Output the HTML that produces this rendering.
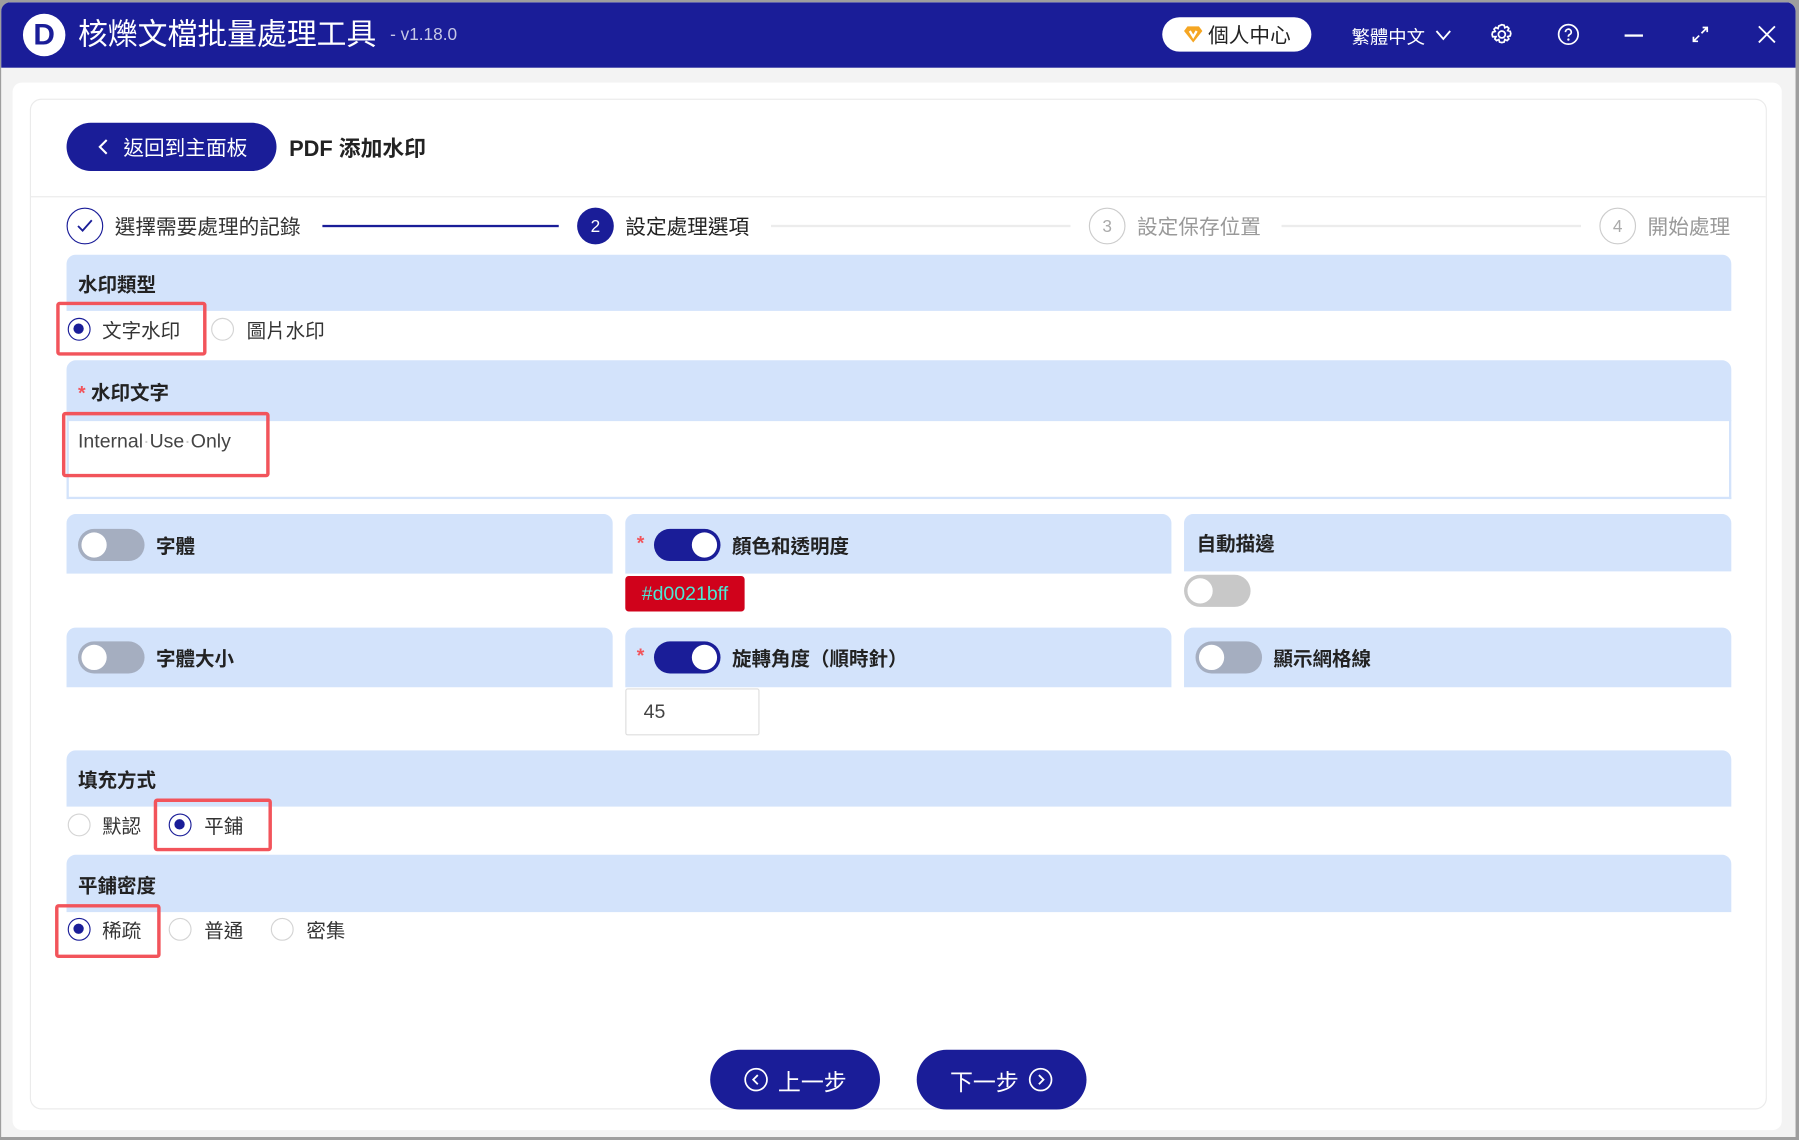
<!DOCTYPE html>
<html><head><meta charset="utf-8">
<style>
*{box-sizing:border-box;margin:0;padding:0}
html,body{width:1799px;height:1140px;overflow:hidden;background:#9e9e9e}
#w{position:absolute;left:0;top:0;width:1568px;height:994px;transform:scale(1.14732);transform-origin:0 0;font-family:"Liberation Sans","Noto Sans CJK TC",sans-serif;color:#333}
.a{position:absolute}
.win{left:1px;top:2px;width:1564px;height:989px;background:#f3f3f3;border-radius:8px 8px 0 0;overflow:hidden}
.tb{left:0;top:0;width:1564px;height:57px;background:#1a1d98}
.panel{left:11px;top:72px;width:1542px;height:913px;background:#fff;border-radius:8px}
.card{left:26px;top:86px;width:1514px;height:881px;border:1px solid #ebebeb;border-radius:10px}
.hdr{background:#d3e3fb;border-radius:8px 8px 0 0;font-weight:bold;font-size:17px;color:#222}
.rd{width:20px;height:20px;border-radius:50%;border:1px solid #d4d4d4;background:#fff}
.rd.on{border:1.5px solid #1a1d98}
.rd.on::after{content:"";position:absolute;left:4px;top:4px;width:9px;height:9px;border-radius:50%;background:#1a1d98}
.lb{font-size:17px;color:#333}
.red{border:3px solid #f2545b;border-radius:3px}
.tg{width:58px;height:28px;border-radius:14px;background:#a5aec0}
.tg::after{content:"";position:absolute;top:3px;left:3px;width:22px;height:22px;border-radius:50%;background:#fff}
.tg.on{background:#1a1d98}
.tg.on::after{left:33px}
.tg.g{background:#c8c8c8}
.star{color:#f2545b;font-weight:bold}
.btn{background:#1a1d98;color:#fff;border-radius:26px;font-size:20px;display:flex;align-items:center;justify-content:center;gap:8px}
.sc{width:32px;height:32px;border-radius:50%;display:flex;align-items:center;justify-content:center;font-size:15px}
.st{font-size:18px;top:184px}
</style></head><body><div id="w">
<div class="a win">
 <div class="a tb"></div>
</div>
<div class="a" style="left:20px;top:12px;width:37px;height:37px;border-radius:50%;background:#fff;display:flex;align-items:center;justify-content:center;color:#1a1d98;font-weight:bold;font-size:26px">D</div>
<div class="a" style="left:68px;top:13px;font-size:26px;color:#fff;line-height:34px">核爍文檔批量處理工具</div>
<div class="a" style="left:340px;top:22px;font-size:15px;color:#c6c8e6">- v1.18.0</div>
<div class="a" style="left:1013px;top:15px;width:130px;height:30px;background:#fff;border-radius:15px;display:flex;align-items:center;justify-content:center;gap:4px;font-size:18px;color:#222">
 <svg width="18" height="16" viewBox="0 0 18 16"><path d="M4 1h10l3 4-8 10L1 5z" fill="#f5a623"/><path d="M6 5l3 5 3-5" stroke="#fff" stroke-width="2" fill="none"/></svg>個人中心</div>
<div class="a" style="left:1178px;top:19px;font-size:16px;color:#fff">繁體中文</div>
<svg class="a" style="left:1250px;top:24px" width="16" height="12"><path d="M2 3l6 7 6-7" stroke="#fff" stroke-width="1.6" fill="none"/></svg>
<svg class="a" style="left:1299px;top:20px" width="20" height="20" viewBox="0 0 20 20"><path d="M10 1.5l2 .5.6 2.2 2-1 1.5 1.5-1 2 2.2.6.5 2-.5 2-2.2.6 1 2-1.5 1.5-2-1-.6 2.2-2 .5-2-.5-.6-2.2-2 1-1.5-1.5 1-2L2 12l-.5-2 .5-2 2.2-.6-1-2L4.7 3.9l2 1 .6-2.2z" stroke="#fff" stroke-width="1.5" fill="none"/><circle cx="10" cy="10" r="3" stroke="#fff" stroke-width="1.5" fill="none"/></svg>
<svg class="a" style="left:1357px;top:20px" width="20" height="20"><circle cx="10" cy="10" r="8.5" stroke="#fff" stroke-width="1.5" fill="none"/><path d="M7.5 8a2.5 2.5 0 1 1 3.5 2.2c-.8.4-1 .9-1 1.8" stroke="#fff" stroke-width="1.5" fill="none"/><circle cx="10" cy="14.5" r="1" fill="#fff"/></svg>
<div class="a" style="left:1416px;top:30px;width:16px;height:2px;background:#fff"></div>
<svg class="a" style="left:1474px;top:22px" width="16" height="16"><path d="M9 7l5-5M10 2h4v4M7 9l-5 5M2 10v4h4" stroke="#fff" stroke-width="1.5" fill="none"/></svg>
<svg class="a" style="left:1532px;top:22px" width="16" height="16"><path d="M1 1l14 14M15 1L1 15" stroke="#fff" stroke-width="1.6"/></svg>

<div class="a panel"></div>
<div class="a card"></div>
<div class="a btn" style="left:58px;top:107px;width:183px;height:42px;border-radius:21px;font-size:18px;gap:12px">
 <svg width="12" height="16"><path d="M9 2L3 8l6 6" stroke="#fff" stroke-width="1.8" fill="none"/></svg>返回到主面板</div>
<div class="a" style="left:252px;top:115px;font-size:19px;font-weight:bold;color:#222">PDF 添加水印</div>
<div class="a" style="left:27px;top:171px;width:1512px;height:1px;background:#ebebeb"></div>
<div class="a sc" style="left:58px;top:181px;border:1.5px solid #1a1d98"><svg width="16" height="14"><path d="M2 7l4 4 8-9" stroke="#1a1d98" stroke-width="1.6" fill="none"/></svg></div>
<div class="a st" style="left:100px;color:#333">選擇需要處理的記錄</div>
<div class="a" style="left:281px;top:196px;width:206px;height:2px;background:#1a1d98"></div>
<div class="a sc" style="left:503px;top:181px;background:#1a1d98;color:#fff">2</div>
<div class="a st" style="left:545px;color:#222">設定處理選項</div>
<div class="a" style="left:672px;top:196px;width:261px;height:2px;background:#ececec"></div>
<div class="a sc" style="left:949px;top:181px;border:1px solid #ccc;color:#aaa">3</div>
<div class="a st" style="left:991px;color:#999">設定保存位置</div>
<div class="a" style="left:1117px;top:196px;width:261px;height:2px;background:#ececec"></div>
<div class="a sc" style="left:1394px;top:181px;border:1px solid #ccc;color:#aaa">4</div>
<div class="a st" style="left:1436px;color:#999">開始處理</div>

<div class="a hdr" style="left:58px;top:222px;width:1451px;height:49px;padding:12px 10px">水印類型</div>
<div class="a rd on" style="left:59px;top:277px"></div><div class="a lb" style="left:89px;top:274px">文字水印</div>
<div class="a rd" style="left:184px;top:277px"></div><div class="a lb" style="left:215px;top:274px">圖片水印</div>
<div class="a red" style="left:49px;top:263px;width:131px;height:47px"></div>

<div class="a hdr" style="left:58px;top:314px;width:1451px;height:53px;padding:14px 10px"><span class="star">*</span> 水印文字</div>
<div class="a" style="left:58px;top:366px;width:1451px;height:69px;border:2px solid #d3e3fb;border-top:none"></div>
<div class="a" style="left:68px;top:375px;font-size:17px;color:#444">Internal<span style="color:#ccc">·</span>Use<span style="color:#ccc">·</span>Only</div>
<div class="a red" style="left:54px;top:359px;width:181px;height:57px"></div>

<div class="a hdr" style="left:58px;top:448px;width:476px;height:52px"></div>
<div class="a tg" style="left:68px;top:461px"></div><div class="a" style="left:136px;top:462px;font-weight:bold;font-size:17px;color:#222">字體</div>
<div class="a hdr" style="left:545px;top:448px;width:476px;height:52px"></div>
<div class="a star" style="left:555px;top:464px;font-size:17px">*</div>
<div class="a tg on" style="left:570px;top:461px"></div><div class="a" style="left:638px;top:462px;font-weight:bold;font-size:17px;color:#222">顏色和透明度</div>
<div class="a" style="left:545px;top:502px;width:104px;height:31px;background:#d0021b;border-radius:3px;color:#4ce8d4;font-size:17px;display:flex;align-items:center;justify-content:center">#d0021bff</div>
<div class="a hdr" style="left:1032px;top:448px;width:477px;height:50px;padding:12px 11px">自動描邊</div>
<div class="a tg g" style="left:1032px;top:501px"></div>

<div class="a hdr" style="left:58px;top:547px;width:476px;height:52px"></div>
<div class="a tg" style="left:68px;top:559px"></div><div class="a" style="left:136px;top:560px;font-weight:bold;font-size:17px;color:#222">字體大小</div>
<div class="a hdr" style="left:545px;top:547px;width:476px;height:52px"></div>
<div class="a star" style="left:555px;top:562px;font-size:17px">*</div>
<div class="a tg on" style="left:570px;top:559px"></div><div class="a" style="left:638px;top:560px;font-weight:bold;font-size:17px;color:#222">旋轉角度（順時針）</div>
<div class="a" style="left:545px;top:600px;width:117px;height:41px;border:1px solid #ddd;border-radius:2px;padding:10px 15px;font-size:17px;color:#444">45</div>
<div class="a hdr" style="left:1032px;top:547px;width:477px;height:52px"></div>
<div class="a tg" style="left:1042px;top:559px"></div><div class="a" style="left:1110px;top:560px;font-weight:bold;font-size:17px;color:#222">顯示網格線</div>

<div class="a hdr" style="left:58px;top:654px;width:1451px;height:49px;padding:12px 10px">填充方式</div>
<div class="a rd" style="left:59px;top:709px"></div><div class="a lb" style="left:89px;top:706px">默認</div>
<div class="a rd on" style="left:147px;top:709px"></div><div class="a lb" style="left:178px;top:706px">平鋪</div>
<div class="a red" style="left:134px;top:696px;width:103px;height:46px"></div>

<div class="a hdr" style="left:58px;top:745px;width:1451px;height:50px;padding:13px 10px">平鋪密度</div>
<div class="a rd on" style="left:59px;top:800px"></div><div class="a lb" style="left:89px;top:797px">稀疏</div>
<div class="a rd" style="left:147px;top:800px"></div><div class="a lb" style="left:178px;top:797px">普通</div>
<div class="a rd" style="left:236px;top:800px"></div><div class="a lb" style="left:267px;top:797px">密集</div>
<div class="a red" style="left:48px;top:788px;width:92px;height:47px"></div>

<div class="a btn" style="left:619px;top:915px;width:148px;height:52px">
 <svg width="22" height="22"><circle cx="11" cy="11" r="9.5" stroke="#fff" stroke-width="1.5" fill="none"/><path d="M12.5 7l-4 4 4 4" stroke="#fff" stroke-width="1.6" fill="none"/></svg>上一步</div>
<div class="a btn" style="left:799px;top:915px;width:148px;height:52px">下一步
 <svg width="22" height="22"><circle cx="11" cy="11" r="9.5" stroke="#fff" stroke-width="1.5" fill="none"/><path d="M9.5 7l4 4-4 4" stroke="#fff" stroke-width="1.6" fill="none"/></svg></div>
</div></body></html>
